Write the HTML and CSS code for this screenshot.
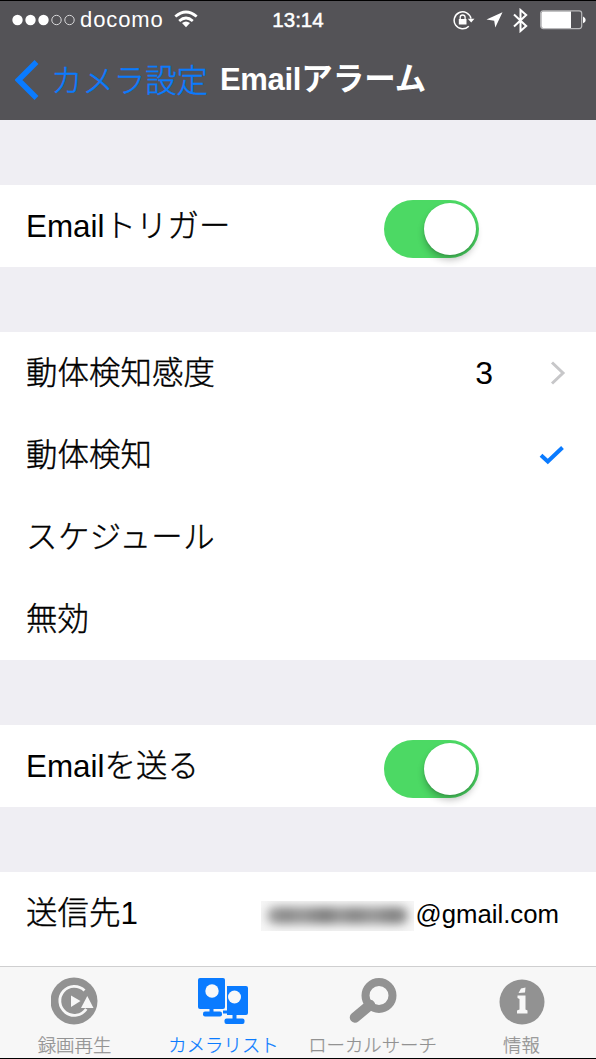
FILE: index.html
```html
<!DOCTYPE html>
<html lang="ja">
<head>
<meta charset="utf-8">
<title>Emailアラーム</title>
<link rel="stylesheet" href="styles.css">
</head>
<body>
<div class="screen">
  <header class="header">
    <div class="status">
      <div class="status-left">
        <svg class="signal" width="64" height="12" viewBox="0 0 64 12">
          <g fill="#fff"><circle cx="5.5" cy="6" r="5.2"/><circle cx="18.5" cy="6" r="5.2"/><circle cx="31.500" cy="6" r="5.2"/></g>
          <g fill="none" stroke="#d8d8da" stroke-width="1"><circle cx="44.500" cy="6" r="4.700"/><circle cx="57.500" cy="6" r="4.700"/></g>
        </svg>
        <span class="carrier">docomo</span>
        <svg class="wifi" width="24" height="18" viewBox="0 0 24 18">
          <g fill="none" stroke="#fff" stroke-width="2.700"><path d="M1.300 6.600Q12 -2.600 22.700 6.600"/><path d="M5.200 11Q12 5 18.800 11"/></g>
          <path d="M8 13.100Q12 10 16 13.100L12 17.300Z" fill="#fff"/>
        </svg>
      </div>
      <span class="time">13:14</span>
      <div class="status-right">
        <svg width="22" height="20" viewBox="0 0 22 20">
          <path d="M15.800 16.200A8.500 8.500 0 1 1 18 8.700" fill="none" stroke="#fff" stroke-width="1.500"/>
          <path d="M14.800 8.700H21.500L18.200 12.600Z" fill="#fff"/>
          <path d="M5.800 9H13.500V14.500H5.800Z" fill="#fff"/>
          <path d="M7.200 9V7.300Q7.200 5 9.650 5T12.100 7.300V9" fill="none" stroke="#fff" stroke-width="1.300"/>
        </svg>
        <svg class="arrow" width="17" height="16" viewBox="0 0 17 16"><path d="M16.500 .3L9.300 15.600L8.200 8.700L.5 7.400Z" fill="#fff"/></svg>
        <svg class="bluetooth" width="15" height="25" viewBox="0 0 15 25"><path d="M1 6.500L13.200 18L7.500 23V2L13.200 7L1 18.500" fill="none" stroke="#fff" stroke-width="2"/></svg>
        <svg class="battery" width="46" height="20" viewBox="0 0 46 20">
          <rect x=".7" y=".8" width="41" height="17.800" rx="2.500" fill="none" stroke="#b9b9bb" stroke-width="1.200"/>
          <path d="M3.200 1.500H31V18H3.200Q1.400 18 1.400 16V3.500Q1.400 1.500 3.200 1.500Z" fill="#fff"/>
          <path d="M43 6.500Q45.700 7.500 45.700 10T43 13.300Z" fill="#fff"/>
        </svg>
      </div>
    </div>
    <nav class="navbar">
      <svg class="back-icon" width="24" height="40" viewBox="0 0 24 40"><path d="M21.500 2L3.500 20L21.500 38" fill="none" stroke="#0a7bff" stroke-width="5.500"/></svg>
      <span class="back-label">カメラ設定</span>
      <h1 class="title"><span class="title-latin">Email</span>アラーム</h1>
    </nav>
  </header>

  <main class="content">
    <section class="group">
      <div class="row"><span class="label">Email<span class="kana">トリガー</span></span><span class="switch"><span class="knob"></span></span></div>
    </section>
    <section class="group">
      <div class="row">
        <span class="label kana">動体検知感度</span><span class="value">3</span>
        <svg class="chevron" width="16" height="24" viewBox="0 0 16 24"><path d="M2 1.500L13 12L2 22.500" fill="none" stroke="#c7c7c9" stroke-width="3"/></svg>
      </div>
      <div class="row">
        <span class="label kana">動体検知</span>
        <svg class="check" width="26" height="20" viewBox="0 0 26 20"><path d="M2 10.200L8.800 16.500L23.500 2.500" fill="none" stroke="#0a7bff" stroke-width="4"/></svg>
      </div>
      <div class="row"><span class="label kana wide">スケジュール</span></div>
      <div class="row"><span class="label kana">無効</span></div>
    </section>
    <section class="group">
      <div class="row"><span class="label">Email<span class="kana">を送る</span></span><span class="switch"><span class="knob"></span></span></div>
    </section>
    <section class="group group-last">
      <div class="row">
        <span class="label"><span class="kana">送信先</span>1</span>
        <span class="redacted"><span class="smudge"></span></span>
        <span class="address">@gmail.com</span>
      </div>
    </section>
  </main>

  <footer class="tabs">
    <div class="tab">
      <svg width="48" height="48" viewBox="0 0 48 48">
        <circle cx="23" cy="24" r="23.500" fill="#929292"/>
        <path d="M33.500 13.500A14.500 14.500 0 1 0 35.300 32" fill="none" stroke="#f7f7f7" stroke-width="2.800"/>
        <path d="M20 18.500V30L29.500 24Z" fill="#f7f7f7"/>
        <path d="M36.300 19L42.500 31H30Z" fill="#f7f7f7"/>
      </svg>
      <span>録画再生</span>
    </div>
    <div class="tab active">
      <svg width="52" height="48" viewBox="0 0 52 48">
        <g fill="#0a7bff">
          <rect x="0" y="1" width="27" height="31" rx="2"/><rect x="11.500" y="31" width="4" height="5"/><rect x="5" y="34.500" width="19" height="5" rx="2"/>
          <path d="M29 9H48Q50 9 50 11V36Q50 38 48 38H29V36.500H25V33.500H29Z"/>
          <rect x="34.500" y="37" width="4" height="6"/><rect x="26.500" y="41.500" width="20" height="5.500" rx="2"/>
        </g>
        <circle cx="14" cy="14" r="6.700" fill="#f8f8f8"/><circle cx="36.500" cy="20" r="6.500" fill="#f8f8f8"/>
      </svg>
      <span>カメラリスト</span>
    </div>
    <div class="tab">
      <svg width="48" height="48" viewBox="0 0 48 48"><g fill="none" stroke="#929292"><circle cx="30" cy="18.500" r="13.500" stroke-width="8"/><path d="M21 28L6 40.500" stroke-width="10.500" stroke-linecap="round"/></g></svg>
      <span>ローカルサーチ</span>
    </div>
    <div class="tab">
      <svg width="46" height="48" viewBox="0 0 46 48">
        <circle cx="23" cy="25" r="22.500" fill="#929292"/>
        <path d="M19.500 16L22 11.500L26.500 10.500L26 15.500ZM18.500 18.500H26.500V32.500L28.500 33.500V36.500H18V33.500L20.500 32.500V22L18.500 21Z" fill="#f8f8f8"/>
      </svg>
      <span>情報</span>
    </div>
  </footer>
</div>
</body>
</html>
```
FILE: styles.css
```css
* { box-sizing: border-box; }
body { margin: 0; }
svg { display: block; flex: none; }

.screen {
  width: 596px;
  height: 1059px;
  display: flex;
  flex-direction: column;
  overflow: hidden;
  border-top: 1px solid #000;
  border-bottom: 1px solid #000;
  background: #efeef3;
  color: #000;
  font-family: "Liberation Sans", "Noto Sans CJK JP", sans-serif;
  font-weight: 300;
  white-space: nowrap;
}

.header {
  flex: none;
  height: 119px;
  background: #545357;
  color: #fff;
}

.status {
  display: grid;
  grid-template-columns: 1fr auto 1fr;
  align-items: center;
  height: 38px;
  padding: 0 12px;
}
.status-left, .status-right { display: flex; align-items: center; }
.status-right { justify-content: flex-end; }
.carrier { width: 84px; margin-left: 4px; font-size: 22px; letter-spacing: .9px; line-height: 24px; }
.wifi { margin-left: 10px; margin-bottom: 3px; }
.time { font-size: 20.5px; line-height: 24px; -webkit-text-stroke: .5px #fff; }
.arrow { margin-left: 11px; }
.bluetooth { margin-left: 10px; }
.battery { margin: 0 -2px 0 12px; }

.navbar { display: flex; align-items: center; height: 81px; padding-left: 15px; }
.back-label {
  margin: 0 0 3px 12px;
  color: #0a7bff;
  font-size: 31.4px;
  -webkit-text-stroke: .4px;
}
.title { margin: 0 0 0 12px; font-size: 31.5px; line-height: 46px; font-weight: 700; }
.title-latin { font-size: 31px; letter-spacing: -.3px; }

.content { flex: 1; min-height: 0; overflow: hidden; }
.group { margin-top: 65px; background: #fff; }
.group-last { height: 100px; }
.row {
  display: flex;
  align-items: center;
  height: 82px;
  padding-left: 26px;
  padding-right: 30px;
}
.label { flex: 1; padding-top: 1px; font-size: 31.4px; line-height: 46px; }
.kana { -webkit-text-stroke: .4px; letter-spacing: .1px; }
.wide { letter-spacing: .5px; }
.value { margin-right: 57px; font-size: 32px; }
.check { margin-right: 1px; }

.switch {
  flex: none;
  width: 95px;
  height: 58px;
  margin: 6px 87px 0 0;
  padding: 3px;
  display: flex;
  justify-content: flex-end;
  border-radius: 29px;
  background: #4cd964;
}
.knob {
  width: 52px;
  height: 52px;
  border-radius: 50%;
  background: #fff;
  box-shadow: 0 5px 7px rgba(0, 0, 0, .24), 0 1px 2px rgba(0, 0, 0, .12);
}

.redacted {
  width: 153px;
  height: 30px;
  margin: 6px 2px 0 0;
  padding: 6px;
  overflow: hidden;
  background: #f6f6f6;
}
.smudge {
  display: block;
  height: 17px;
  border-radius: 7px;
  background: linear-gradient(90deg, #aaa, #888 12%, #999 25%, #7c7c7c 42%, #999 52%, #858585 62%, #999 75%, #808080 90%, #999);
  filter: blur(5px);
}
.address { margin: 3px 7px 0 0; font-size: 25.75px; }

.tabs {
  flex: none;
  display: grid;
  grid-template-columns: repeat(4, 149px);
  height: 92px;
  border-top: 1px solid #cfcfd0;
  background: #f7f7f7;
}
.tab {
  display: flex;
  flex-direction: column;
  align-items: center;
  padding-top: 10px;
  color: #929292;
  font-size: 18.4px;
  line-height: 27px;
}
.tab span { margin-top: 7px; -webkit-text-stroke: .25px; }
.active { color: #0a7bff; }
```
